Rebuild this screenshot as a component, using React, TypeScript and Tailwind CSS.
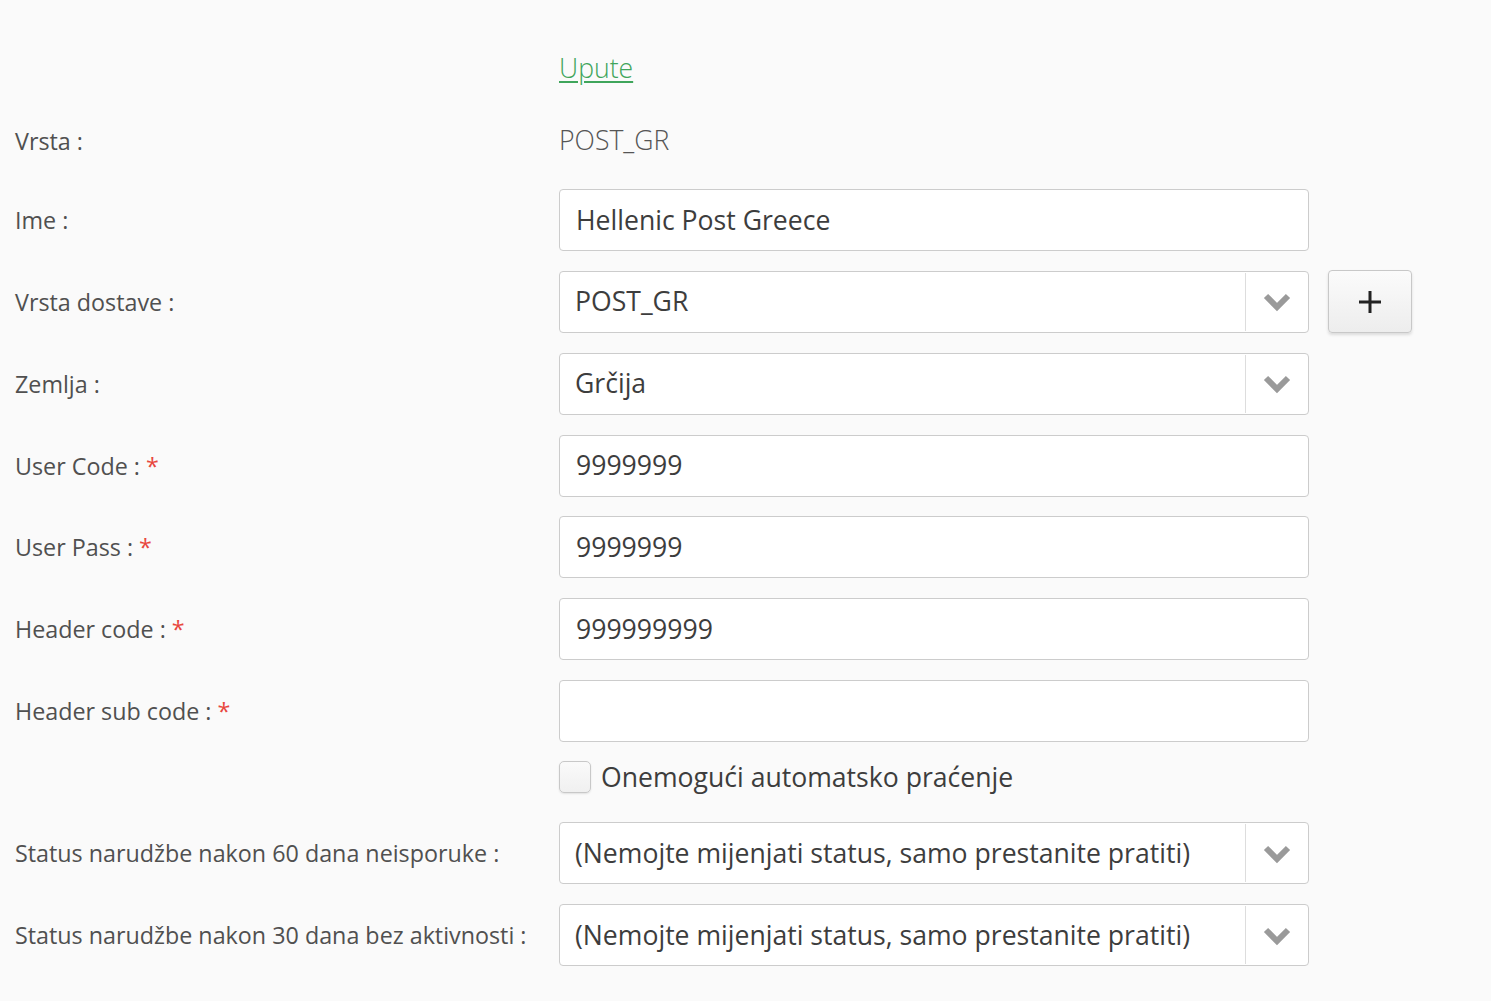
import React from "react";

const font = { fontFamily: '"Open Sans", "Noto Sans", sans-serif' };

function Chevron() {
  return (
    <svg width="28" height="20" viewBox="0 0 28 20" className="block">
      <path d="M3 4 L14 15 L25 4" fill="none" stroke="#9a9a9a" strokeWidth="6" strokeLinecap="butt" strokeLinejoin="miter" />
    </svg>
  );
}

function Label({ text, req }: { text: string; req?: boolean }) {
  return (
    <div className="w-[559px] shrink-0 pl-[15px] pt-[1px] text-[23.3px] text-[#505050]">
      {text}
      {req && <span className="ml-[6px] text-[#e8473e]">*</span>}
    </div>
  );
}

function Input({ value }: { value: string }) {
  return (
    <div className="flex h-[62px] w-[750px] items-center rounded-[4px] border border-[#cccccc] bg-white pl-[16px] pt-[1px] text-[26.6px] text-[#3d3d3d]">
      {value}
    </div>
  );
}

function Select({ value }: { value: string }) {
  return (
    <div className="flex h-[62px] w-[750px] items-stretch rounded-[4px] border border-[#cccccc] bg-white text-[26.6px] text-[#3d3d3d]">
      <div className="flex flex-1 items-center pl-[15px] pt-[1px]">{value}</div>
      <div className="my-[1px] w-px bg-[#dddddd]" />
      <div className="flex w-[62px] items-center justify-center pt-[1px]">
        <Chevron />
      </div>
    </div>
  );
}

function Row({ children, h = "h-[62px]" }: { children: React.ReactNode; h?: string }) {
  return <div className={`flex items-center ${h}`}>{children}</div>;
}

export default function App() {
  return (
    <div className="min-h-[1001px] w-full bg-[#fafafa]" style={font}>
      <div className="flex flex-col pt-[49px]">
        <Row h="h-[40px]">
          <div className="w-[559px] shrink-0" />
          <a className="text-[26.6px] font-light text-[#3fa55b] underline decoration-[2px] underline-offset-[3px]">Upute</a>
        </Row>
        <div className="mt-[32px]">
          <Row h="h-[40px]">
            <Label text="Vrsta :" />
            <div className="text-[26.6px] font-light text-[#555555]">POST_GR</div>
          </Row>
        </div>
        <div className="mt-[28px] flex flex-col gap-[19.85px]">
          <Row>
            <Label text="Ime :" />
            <Input value="Hellenic Post Greece" />
          </Row>
          <Row>
            <Label text="Vrsta dostave :" />
            <Select value="POST_GR" />
            <button className="ml-[19px] flex h-[63px] w-[84px] items-center justify-center rounded-[4px] border border-[#c8c8c8] bg-gradient-to-b from-[#fbfbfb] to-[#ededed] shadow-[0_2px_3px_rgba(0,0,0,0.12)]">
              <svg width="22" height="22" viewBox="0 0 22 22">
                <path d="M11 0 V22 M0 11 H22" stroke="#222" strokeWidth="3" />
              </svg>
            </button>
          </Row>
          <Row>
            <Label text="Zemlja :" />
            <Select value="Grčija" />
          </Row>
          <Row>
            <Label text="User Code :" req />
            <Input value="9999999" />
          </Row>
          <Row>
            <Label text="User Pass :" req />
            <Input value="9999999" />
          </Row>
          <Row>
            <Label text="Header code :" req />
            <Input value="999999999" />
          </Row>
          <Row>
            <Label text="Header sub code :" req />
            <Input value="" />
          </Row>
        </div>
        <div className="mt-[18px]">
          <Row h="h-[34px]">
            <div className="w-[559px] shrink-0" />
            <div className="h-[32px] w-[32px] rounded-[5px] border border-[#c8c8c8] bg-gradient-to-b from-[#fafafa] to-[#f0f0f0] shadow-[0_1px_2px_rgba(0,0,0,0.1)]" />
            <span className="ml-[10px] pt-[1px] text-[26.6px] text-[#3d3d3d]">Onemogući automatsko praćenje</span>
          </Row>
        </div>
        <div className="mt-[28px] flex flex-col gap-[20px]">
          <Row>
            <Label text="Status narudžbe nakon 60 dana neisporuke :" />
            <Select value="(Nemojte mijenjati status, samo prestanite pratiti)" />
          </Row>
          <Row>
            <Label text="Status narudžbe nakon 30 dana bez aktivnosti :" />
            <Select value="(Nemojte mijenjati status, samo prestanite pratiti)" />
          </Row>
        </div>
      </div>
    </div>
  );
}
